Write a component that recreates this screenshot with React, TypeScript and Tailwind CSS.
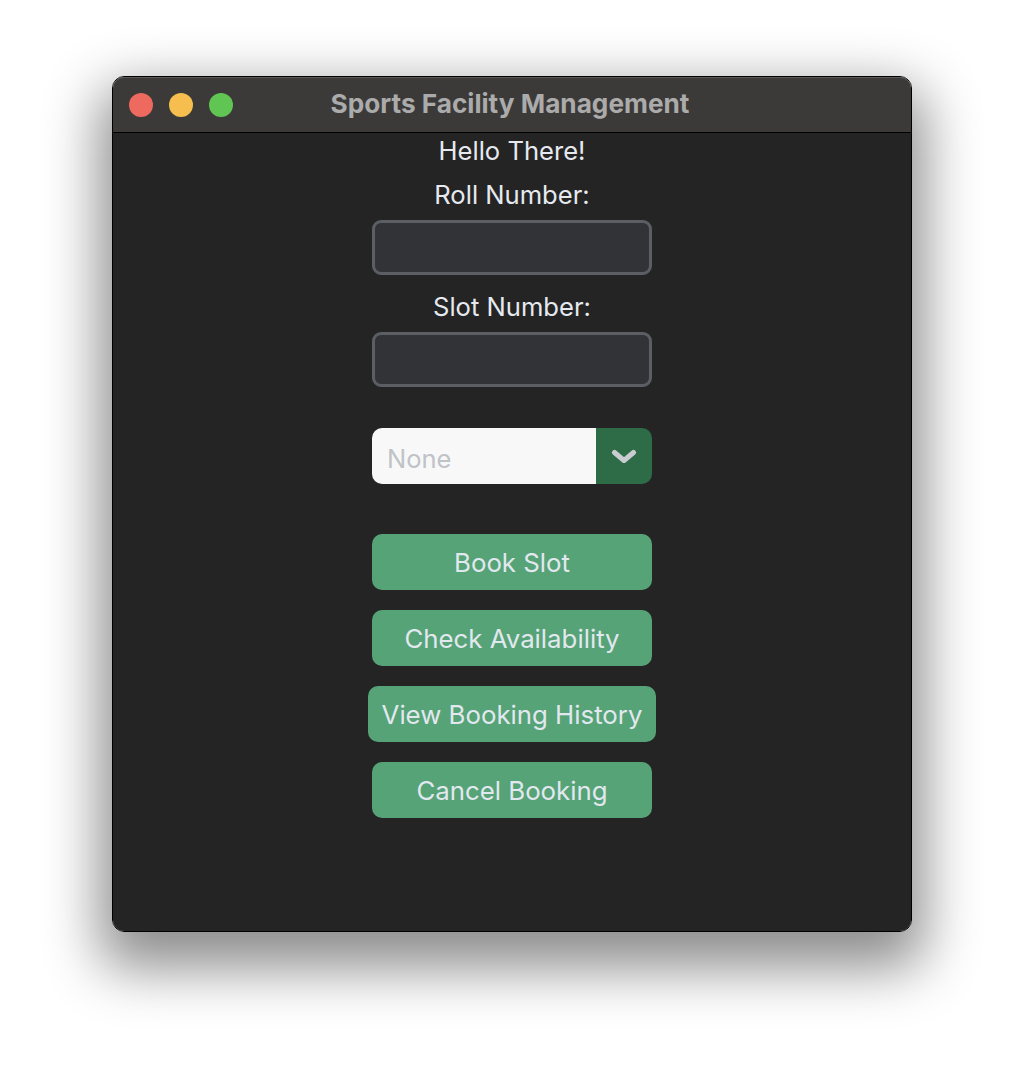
import React from "react";

function Btn({ label, wide }: { label: string; wide?: boolean }) {
  return (
    <button
      className={`${wide ? "w-[288px]" : "w-[280px]"} h-[56px] rounded-[10px] bg-[#55a376] text-[#e2e8ef] text-[25.8px] flex items-center justify-center pt-[3px]`}
    >
      {label}
    </button>
  );
}

export default function App() {
  return (
    <div
      className="w-[1024px] h-[1080px] bg-white pt-[76px] pl-[112px]"
      style={{ fontFamily: "Inter, 'Noto Sans', sans-serif" }}
    >
      <div className="w-[800px] h-[856px] rounded-[12px] border border-black shadow-[0_24px_55px_12px_rgba(0,0,0,0.45)] overflow-hidden flex flex-col">
        <div className="h-[56px] flex-none bg-[#3b3a39] border-b border-black flex items-center relative rounded-t-[11px] shadow-[inset_0_1px_0_#5a5958]">
          <div className="flex gap-[16px] pl-[16px]">
            <span className="w-[24px] h-[24px] rounded-full bg-[#ee6a5f]" />
            <span className="w-[24px] h-[24px] rounded-full bg-[#f5be4f]" />
            <span className="w-[24px] h-[24px] rounded-full bg-[#61c554]" />
          </div>
          <div className="absolute inset-0 flex items-center justify-center pb-[2px]">
            <span className="text-[26.2px] font-bold text-[#ababab] mr-[4px]">Sports Facility Management</span>
          </div>
        </div>
        <div className="flex-1 bg-[#242424] flex flex-col items-center pt-[4px]">
          <div className="h-[28px] leading-[28px] text-[25.6px] text-[#e6eaf0]">Hello There!</div>
          <div className="h-[28px] leading-[28px] text-[25.6px] text-[#e6eaf0] mt-[16px]">Roll Number:</div>
          <div className="w-[280px] h-[55px] mt-[11px] rounded-[9px] border-[3px] border-[#5b5e62] bg-[#323336]" />
          <div className="h-[28px] leading-[28px] text-[25.6px] text-[#e6eaf0] mt-[18px]">Slot Number:</div>
          <div className="w-[280px] h-[55px] mt-[11px] rounded-[9px] border-[3px] border-[#5b5e62] bg-[#323336]" />
          <div className="w-[280px] h-[56px] mt-[41px] rounded-[10px] overflow-hidden flex">
            <div className="flex-1 bg-[#f8f8f8] flex items-center pl-[15px] pt-[6px] text-[25.5px] text-[#bfc3c7]">None</div>
            <div className="w-[56px] bg-[#2e6b47] flex items-center justify-center pt-[2px]">
              <svg width="26" height="17" viewBox="0 0 26 17">
                <path d="M3.5 3.5 L13 11.5 L22.5 3.5" fill="none" stroke="#c9cdd1" strokeWidth="5" strokeLinecap="round" strokeLinejoin="round" />
              </svg>
            </div>
          </div>
          <div className="mt-[50px] flex flex-col items-center gap-[20px]">
            <Btn label="Book Slot" />
            <Btn label="Check Availability" />
            <Btn label="View Booking History" wide />
            <Btn label="Cancel Booking" />
          </div>
        </div>
      </div>
    </div>
  );
}
